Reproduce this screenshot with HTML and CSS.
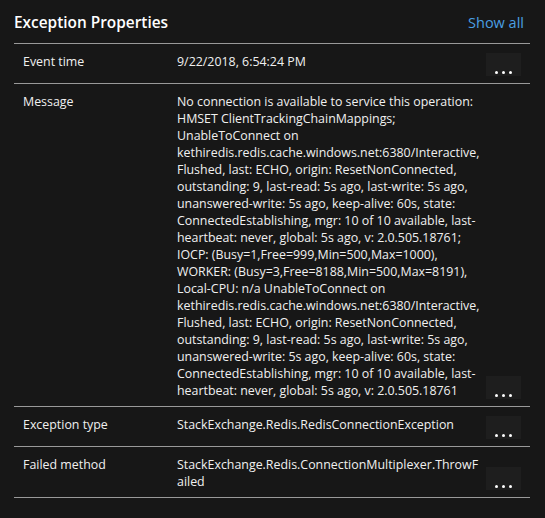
FILE: index.html
```html
<!DOCTYPE html>
<html lang="en">
<head>
<meta charset="utf-8">
<title>Exception Properties</title>
<link rel="stylesheet" href="styles.css">
</head>
<body>
<section class="panel">
  <header class="panel-header">
    <h2 class="panel-title">Exception Properties</h2>
    <a class="show-all" href="#">Show all</a>
  </header>
  <div class="prop-list">
    <div class="prop-row">
      <div class="prop-label">Event time</div>
      <div class="prop-value">9/22/2018, 6:54:24 PM</div>
      <button class="more-btn" aria-label="More"><span class="dot"></span><span class="dot"></span><span class="dot"></span></button>
    </div>
    <div class="prop-row">
      <div class="prop-label">Message</div>
      <div class="prop-value">No connection is available to service this operation: HMSET ClientTrackingChainMappings; UnableToConnect on kethiredis.redis.cache.windows.net:6380/Interactive, Flushed, last: ECHO, origin: ResetNonConnected, outstanding: 9, last-read: 5s ago, last-write: 5s ago, unanswered-write: 5s ago, keep-alive: 60s, state: ConnectedEstablishing, mgr: 10 of 10 available, last-heartbeat: never, global: 5s ago, v: 2.0.505.18761; IOCP: (Busy=1,Free=999,Min=500,Max=1000), WORKER: (Busy=3,Free=8188,Min=500,Max=8191), Local-CPU: n/a UnableToConnect on kethiredis.redis.cache.windows.net:6380/Interactive, Flushed, last: ECHO, origin: ResetNonConnected, outstanding: 9, last-read: 5s ago, last-write: 5s ago, unanswered-write: 5s ago, keep-alive: 60s, state: ConnectedEstablishing, mgr: 10 of 10 available, last-heartbeat: never, global: 5s ago, v: 2.0.505.18761</div>
      <button class="more-btn" aria-label="More"><span class="dot"></span><span class="dot"></span><span class="dot"></span></button>
    </div>
    <div class="prop-row">
      <div class="prop-label">Exception type</div>
      <div class="prop-value">StackExchange.Redis.RedisConnectionException</div>
      <button class="more-btn" aria-label="More"><span class="dot"></span><span class="dot"></span><span class="dot"></span></button>
    </div>
    <div class="prop-row">
      <div class="prop-label">Failed method</div>
      <div class="prop-value">StackExchange.Redis.ConnectionMultiplexer.ThrowFailed</div>
      <button class="more-btn" aria-label="More"><span class="dot"></span><span class="dot"></span><span class="dot"></span></button>
    </div>
  </div>
</section>
</body>
</html>
```
FILE: styles.css
```css
html, body {
  margin: 0;
  padding: 0;
  background: #171717;
}
body {
  font-family: "Open Sans", "Noto Sans", sans-serif;
  color: #f0f0f0;
}
.panel {
  padding: 0 15px 0 14px;
}
.panel-header {
  display: flex;
  align-items: baseline;
  justify-content: space-between;
  padding: 12px 6px 10px 0;
}
.panel-title {
  margin: 0;
  font-size: 15.4px;
  font-weight: 600;
  line-height: 21px;
  color: #ffffff;
}
.show-all {
  font-size: 14.5px;
  line-height: 21px;
  color: #4a9fe3;
  text-decoration: none;
}
.prop-list {
  border-bottom: 1px solid #999999;
}
.prop-row {
  display: flex;
  border-top: 1px solid #999999;
  padding: 9px 9px 7px 9px;
  font-size: 12.4px;
  line-height: 17px;
}
.prop-label {
  flex: none;
  width: 154px;
}
.prop-value {
  flex: none;
  width: 305px;
  overflow-wrap: anywhere;
}
.more-btn {
  flex: none;
  align-self: flex-end;
  margin-left: auto;
  width: 35px;
  height: 23px;
  padding: 0 0 2px 0;
  border: none;
  background: #1e1e1e;
  display: flex;
  align-items: flex-end;
  justify-content: center;
  gap: 4px;
}
.dot {
  width: 3px;
  height: 3px;
  border-radius: 50%;
  background: #ffffff;
}
```
